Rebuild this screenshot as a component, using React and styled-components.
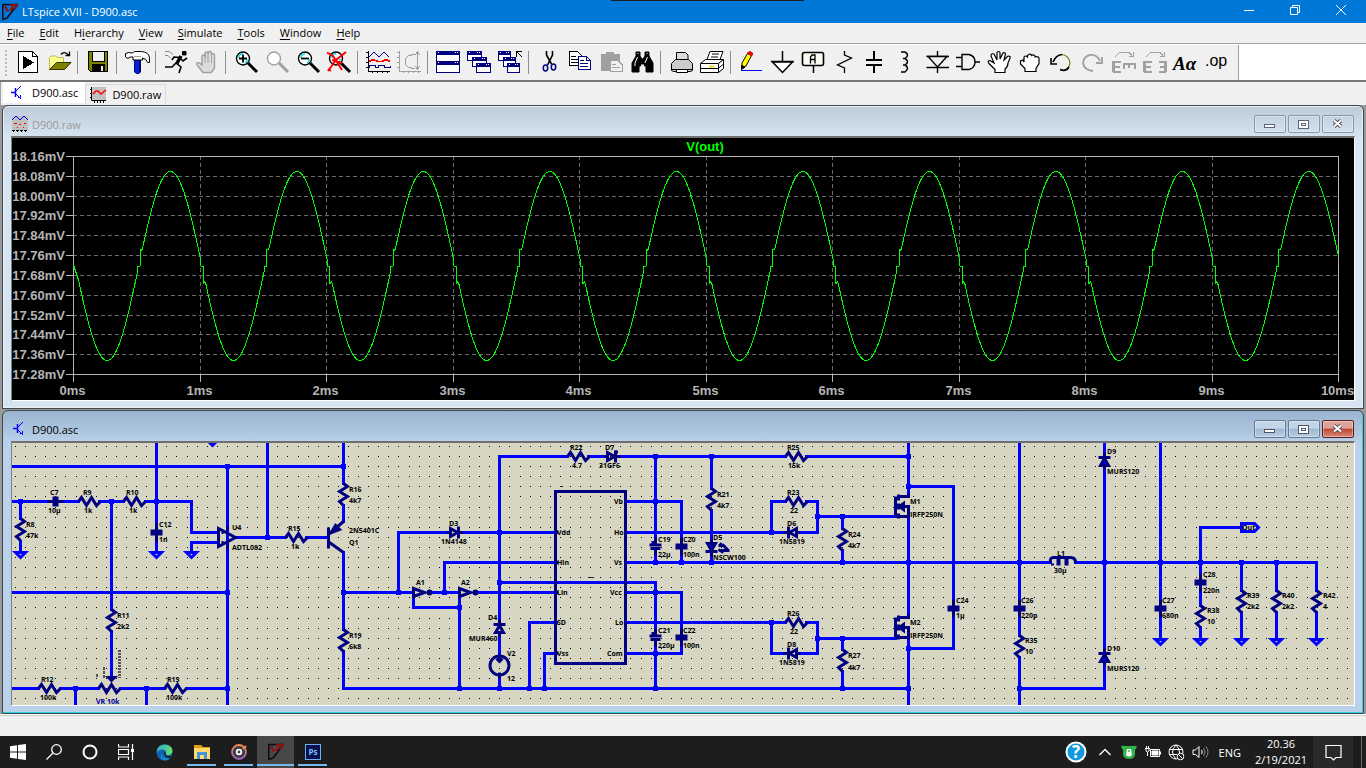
import React from 'react';
import styled, { createGlobalStyle } from 'styled-components';

const GlobalStyle = createGlobalStyle`
  * {
    box-sizing: border-box;
  }

  body {
    margin: 0;
    background: #f0f0f0;
    font-family: 'Open Sans', 'Noto Sans', sans-serif;
    font-size: 11px;
    color: #000;
  }

  button {
    font: inherit;
    color: inherit;
    background: none;
    border: none;
    padding: 0;
    margin: 0;
  }
`;

const Desktop = styled.div`
  display: flex;
  flex-direction: column;
  min-height: 100vh;
`;

const TitleBar = styled.header`
  position: relative;
  display: flex;
  align-items: center;
  height: 23px;
  padding-right: 2px;
  background: #0078d7;
  color: #fff;
`;

const TopHandle = styled.div`
  position: absolute;
  top: 0;
  left: 611px;
  width: 193px;
  height: 1px;
  background: #1f1f1f;
`;

const AppTitle = styled.h1`
  flex: 1;
  margin: 0;
  padding-left: 4px;
  font-size: 11px;
  font-weight: 400;
`;

const AppLogo = styled.svg`
  margin-left: 2px;
  width: 16px;
  height: 18px;
`;

const CaptionButton = styled.button`
  display: flex;
  align-items: center;
  justify-content: center;
  align-self: flex-start;
  width: 46px;
  height: 20px;
`;

const MenuBar = styled.nav`
  display: flex;
  align-items: center;
  gap: 15px;
  height: 21px;
  padding-left: 7px;
  border-bottom: 1px solid #a0a0a0;
`;

const MenuItem = styled.button`
  line-height: 18px;

  u {
    text-underline-offset: 2px;
  }
`;

const ToolbarRow = styled.div`
  display: flex;
  height: 38px;
  background: #fff;
  border-top: 1px solid #fff;
  border-bottom: 2px solid #757575;
`;

const Toolbar = styled.div`
  display: flex;
  align-items: center;
  padding-right: 6px;
  background: #f0f0f0;
  border-right: 1px solid #a0a0a0;
`;

const Grip = styled.div`
  width: 2px;
  height: 26px;
  margin: 0 6px 0 5px;
  background: repeating-linear-gradient(#bcbcbc 0 2px, #f0f0f0 2px 4px);
`;

const ToolButton = styled.button`
  display: flex;
  justify-content: center;
  width: 31px;
`;

const ToolIcon = styled.svg`
  display: block;
  width: 25px;
  height: 23px;
  overflow: visible;
  fill: none;
  stroke: #000;
  stroke-width: 1;
`;

const Separator = styled.div`
  width: 1px;
  height: 23px;
  margin: 0 5px 0 2px;
  background: #909090;
`;

const TabStrip = styled.div`
  display: flex;
  align-items: flex-start;
  height: 23px;
  padding-left: 2px;
  border-left: 1px solid #a0a0a0;
`;

const Tab = styled.button`
  display: flex;
  align-items: center;
  gap: 6px;
  height: ${(p) => (p.$active ? '21px' : '20px')};
  margin-top: ${(p) => (p.$active ? '0' : '2px')};
  padding: ${(p) => (p.$active ? '0 7px' : '0 4px')};
  background: ${(p) => (p.$active ? '#fff' : 'transparent')};
  border: ${(p) => (p.$active ? 'none' : '1px solid #d9d9d9')};
  border-bottom: none;
`;

const SmallIcon = styled.svg`
  display: block;
  width: 16px;
  height: 16px;
  overflow: visible;
  fill: none;
`;

const Workspace = styled.main`
  flex: 1;
  display: flex;
  flex-direction: column;
  gap: 1px;
  padding: 0 2px;
  background: #9a9a9a;
`;

const ChildWindow = styled.section`
  flex: 1;
  display: flex;
  flex-direction: column;
  padding: 0 8px 7px;
  border: 1px solid #40464d;
  border-radius: 6px 6px 0 0;
  background: ${(p) =>
    p.$active
      ? 'linear-gradient(#9ab4d0, #b9d1ea 32px)'
      : 'linear-gradient(#bdcbd9, #d7e4f2 32px)'};
  box-shadow: inset ${(p) => (p.$active ? '-1px -1px 0 #30d0e0' : '0 0 0 1px #e8f0f8')};
`;

const ChildTitle = styled.div`
  display: flex;
  align-items: center;
  gap: 4px;
  height: 30px;
  padding: 6px 1px 0 1px;
`;

const ChildName = styled.h2`
  flex: 1;
  margin: 0;
  font-size: 11px;
  font-weight: 400;
  color: ${(p) => (p.$active ? '#000' : '#999')};
`;

const WindowButtons = styled.div`
  display: flex;
  gap: 2px;
`;

const closeFill = 'linear-gradient(#e0a298 0 45%, #bf4530 50%, #d68a78)';
const activeFill = 'linear-gradient(#c3d5e8 0 45%, #9fb8d2 50%, #b9cde2)';

const WindowButton = styled.button`
  display: flex;
  align-items: center;
  justify-content: center;
  width: 32px;
  height: 18px;
  border: 1px solid ${(p) => (p.$danger ? '#571f23' : p.$active ? '#66788f' : '#8896ac')};
  border-radius: 2px;
  background: ${(p) => (p.$danger ? closeFill : p.$active ? activeFill : 'transparent')};
  box-shadow: inset 0 0 0 1px rgba(255, 255, 255, 0.35);
`;

const Pane = styled.div`
  flex: 1;
  display: flex;
  min-height: 262px;
  border: 1px solid #fff;
  border-top: 2px solid #707070;
  border-left-color: #808080;
  background: ${(p) => p.$fill};
`;

const Drawing = styled.svg`
  display: block;
  flex: 1;
  width: 100%;
  min-width: 0;
`;

const ChartText = styled.text`
  font: 700 13px 'Liberation Sans', Arial, sans-serif;
  fill: ${(p) => p.$fill || '#b4b4b4'};
`;

const PartText = styled.text`
  font: 700 7px 'Open Sans', 'Noto Sans', sans-serif;
  fill: ${(p) => p.$fill || '#000'};
`;

const StatusBar = styled.footer`
  height: 22px;
  border-top: 1px solid #fff;
  box-shadow: inset 0 1px 0 #d0d0d0;
  background: #f0f0f0;
`;

const Taskbar = styled.nav`
  display: flex;
  align-items: stretch;
  height: 32px;
  background: #1d1d1d;
  color: #fff;
`;

const TaskButton = styled.button`
  display: flex;
  flex-direction: column;
  align-items: center;
  justify-content: center;
  width: ${(p) => (p.$pinned ? '37px' : '36px')};
  background: ${(p) => (p.$active ? '#484848' : 'none')};
  position: relative;

  &::after {
    content: '';
    position: absolute;
    bottom: 2px;
    left: ${(p) => (p.$active ? '0' : '4px')};
    right: ${(p) => (p.$active ? '0' : '4px')};
    height: 2px;
    background: ${(p) => (p.$open ? '#76b9ed' : 'none')};
  }
`;

const TaskGap = styled.div`
  width: 2px;
`;

const Tray = styled.div`
  display: flex;
  align-items: center;
  margin-left: auto;
`;

const TrayButton = styled.button`
  display: flex;
  align-items: center;
  justify-content: center;
  width: ${(p) => p.$width || 24}px;
  height: 32px;
`;

const Language = styled.span`
  padding: 0 13px 0 6px;
`;

const Clock = styled.time`
  display: flex;
  flex-direction: column;
  align-items: center;
  width: 54px;
  line-height: 16px;
`;

const ActionCenter = styled.button`
  display: flex;
  align-items: center;
  justify-content: center;
  width: 40px;
  height: 32px;
  margin: 0 8px 0 5px;
  background: #292929;
`;

const ShowDesktop = styled.button`
  width: 5px;
  height: 32px;
  border-left: 1px solid #6a6a6a;
`;

/* ---------- toolbar icons, drawn on a 25 x 23 grid ---------- */

const Lens = ({ color = '#000', children }) => (
  <>
    <circle cx="9" cy="7.5" r="6.5" fill="#fff" stroke={color} strokeWidth="1.4" />
    {color === '#000' && (
      <path d="M5 7V5L7 3h2M13 8v2l-2 2" stroke="#00e0e0" strokeWidth="1.4" />
    )}
    <path d="M14 12l9 9" stroke={color} strokeWidth="3" />
    {children}
  </>
);

const MiniWindow = ({ x, y, w = 14, h = 9 }) => (
  <>
    <rect x={x + 0.5} y={y + 0.5} width={w} height={h} fill="#fff" stroke="#000080" />
    <path d={`M${x} ${y + 2}h${w + 1}`} stroke="#000080" strokeWidth="4" />
    <path
      d={`M${x + 1.5} ${y + 1.5}h1M${x + w - 4} ${y + 1.5}h1M${x + w - 2} ${y + 1.5}h1`}
      stroke="#fff"
    />
  </>
);

const tools = [
  {
    name: 'Run schematic',
    art: (
      <g shapeRendering="crispEdges">
        <path d="M2.5 .5H16.5L21.5 5.5V21.5H2.5Z" fill="#fff" />
        <path d="M16.5 .5V5.5H21.5" />
        <path d="M7 5L18 11.5L7 18Z" fill="#000" stroke="none" />
      </g>
    ),
  },
  {
    name: 'Open',
    art: (
      <>
        <path d="M2.5 18V6.5l1.5-1.5h5l1.5 1.5h6v5" fill="#ffff8c" stroke="#b8b860" />
        <path d="M2.500 18.5L9.5 11.5H24L17.5 18.5Z" fill="#808000" stroke="#303000" />
        <path d="M14 3.5q3-4 7.5 .5M22.5 .5v4h-4" strokeWidth="1.3" />
      </>
    ),
    end: true,
  },
  {
    name: 'Save',
    art: (
      <g shapeRendering="crispEdges">
        <path d="M2.5 .5H21.5V20.5H4.5L2.5 18.5Z" fill="#808000" />
        <rect x="6.5" y=".5" width="12" height="10" fill="#f0f0f0" />
        <rect x="6" y="13" width="13" height="8" fill="#000" stroke="none" />
        <rect x="15" y="15" width="2" height="5" fill="#e8e8e8" stroke="none" />
      </g>
    ),
    end: true,
  },
  {
    name: 'Control panel',
    art: (
      <>
        <path d="M9.5 8h6v13l-1.5 1.5h-2.5L9.5 21Z" fill="#0020e0" stroke="#000080" />
        <path d="M15 8v13" stroke="#000060" strokeWidth="2" />
        <path
          d="M.5 2.5l3-1 4 .5 2-1.500h7q7 .5 8 6v5h-2q-1-4-5-4.5v2H8V6H5L3 7.5.5 6Z"
          fill="#fafafa"
        />
        <path d="M9 5.500h7" stroke="#a0a0a0" />
      </>
    ),
    end: true,
  },
  {
    name: 'Run',
    art: (
      <>
        <path d="M18.5 .5h3.5v3.5h-3.500Z" fill="#000" />
        <path d="M17 5L12.500 13" strokeWidth="3.500" />
        <path d="M16 6.500L10 6l-2 3M17 8l2 2 4-3M12 12l5 4-2 6M12 12l-4 4H1" strokeWidth="1.6" />
        <path d="M1 .5h4l4 3M1 4.5h3l3 3" stroke="#888" />
      </>
    ),
  },
  {
    name: 'Halt',
    art: (
      <>
        <path
          d="M8 21.500L2.500 14.500Q0 11 4.500 12L7 14V5q1.500-2 3 0V2q1.500-2 3 0V1.500q2-2 3.500 0V3q2-1 3 .5V17L16.500 21.500Z"
          fill="#dcdcdc"
          stroke="#a0a0a0"
          strokeWidth="1.4"
        />
        <path d="M10 4v8M13 3v9M16.500 3v9" stroke="#a0a0a0" />
      </>
    ),
    end: true,
  },
  { name: 'Zoom in', art: <Lens><path d="M5 7.5h8M9 3.5v8" strokeWidth="1.8" /></Lens> },
  { name: 'Pan', art: <Lens color="#a0a0a0" /> },
  { name: 'Zoom out', art: <Lens><path d="M5 7.5h8" strokeWidth="1.8" /></Lens> },
  {
    name: 'Zoom full extents',
    art: (
      <Lens>
        <path d="M0 1.5L6 5l9 14M19 1L9 9 1 20M5 9l10 3M1 18l3 2" stroke="#f00" strokeWidth="2" />
      </Lens>
    ),
    end: true,
  },
  {
    name: 'Autorange',
    art: (
      <g shapeRendering="crispEdges">
        <path d="M2.5 0V20.5H24M0 1.5h3M0 6.5h3M0 11.5h3M0 16.5h3M6.5 20v2M11.5 20v2M16.5 20v2M21.5 20v2" />
        <path d="M3 6L8 1l5 5 5-5 5 5" stroke="#0000a0" />
        <path d="M3 10.5l4-2 5 2h4l4-2 4 2" stroke="#f00" strokeWidth="1.5" />
        <path d="M3 16.5v-2h6v2h3v-2h6v2h6v-2" stroke="#000080" />
      </g>
    ),
  },
  {
    name: 'FFT',
    art: (
      <g shapeRendering="crispEdges" stroke="#a0a0a0">
        <path d="M2.5 0V20.5H24M0 1.5h3M0 6.5h3M0 11.5h3M0 16.5h3M6.5 20v2M11.5 20v2M16.5 20v2M21.5 20v2" />
        <path d="M20.5 1v17M18 4l2.5-3L23 4M18 15l2.5 3 2.5-3M18 3l-7 2-3 3v5l3 3 7 2" />
      </g>
    ),
    end: true,
  },
  {
    name: 'Tile windows',
    art: (
      <g shapeRendering="crispEdges">
        <MiniWindow x={0} y={0} w={23} h={11} />
        <MiniWindow x={0} y={10} w={23} h={11} />
      </g>
    ),
  },
  {
    name: 'Cascade windows',
    art: (
      <g shapeRendering="crispEdges">
        <MiniWindow x={0} y={0} />
        <MiniWindow x={5} y={6} />
        <MiniWindow x={9} y={12} />
      </g>
    ),
  },
  {
    name: 'Close all windows',
    art: (
      <g shapeRendering="crispEdges">
        <MiniWindow x={0} y={0} w={12} />
        <MiniWindow x={5} y={6} w={12} />
        <MiniWindow x={9} y={12} w={12} />
        <path d="M18.5 6V.5H24M18.5 .5L24 6" />
      </g>
    ),
    end: true,
  },
  {
    name: 'Cut',
    art: (
      <>
        <path d="M9.5 0v4l5 9M15.500 0v4l-5 10" strokeWidth="1.6" />
        <ellipse cx="8.5" cy="17" rx="2.2" ry="3" stroke="#000080" strokeWidth="1.5" />
        <ellipse cx="16.5" cy="16" rx="2.2" ry="3" stroke="#000080" strokeWidth="1.5" />
      </>
    ),
  },
  {
    name: 'Copy',
    art: (
      <g shapeRendering="crispEdges">
        <path d="M1.5 .5H9.5L13.5 4.5V14.5H1.5Z" fill="#fff" />
        <path d="M3 5.5h5M3 8.5h7M3 11.5h7" />
        <path d="M10.5 5.5H18.5L22.5 9.5V18.5H10.5Z" fill="#fff" stroke="#000080" />
        <path d="M18.5 5.5v4h4M12 9.5h4M12 12.5h8M12 15.5h8" stroke="#000080" />
      </g>
    ),
  },
  {
    name: 'Paste',
    art: (
      <g shapeRendering="crispEdges" stroke="#a0a0a0">
        <path d="M2 3h5V1h7v2h6v16H2Z" fill="#a0a0a0" />
        <path d="M11.5 9.5H19l4 4v7H11.5Z" fill="#f0f0f0" />
        <path d="M13 13.5h4M13 16.5h8" />
      </g>
    ),
  },
  {
    name: 'Find',
    art: (
      <>
        <path
          d="M6 1h4v4l2 3h1l2-3V1h4v4l4 7v9h-7v-6h-1.5v-2h-4v2H9v6H2v-9l4-7Z"
          fill="#000"
        />
        <path d="M7.5 6L5 12v3M17.5 6L15 12M7.5 2.5h1M16.5 2.5h1" stroke="#fff" />
      </>
    ),
    end: true,
  },
  {
    name: 'Print',
    art: (
      <>
        <path d="M7.5 9V1.5h9L19 4v5" fill="#ddd" />
        <path d="M2.5 12.5l4-4h13l4 4v7l-2 1H4.5l-2-1Z" fill="#ccc" />
        <path d="M2 18.500h21M7.5 18.5h11v3h-11Z" fill="#fff" />
      </>
    ),
  },
  {
    name: 'Print setup',
    art: (
      <>
        <path d="M7 8.5L10 .5h13l-3 8" fill="#fff" />
        <path d="M12 3h7M11 6h7" />
        <path d="M.5 12.5l5-4h18l-5 4Z" fill="#fff" />
        <path d="M.5 12.5h18v9H.5ZM18.5 12.5l5-4v9l-5 4" fill="#fff" />
        <path d="M1 17.5h17l5-4" />
        <path d="M9 15.5h5" stroke="#e8e000" strokeWidth="2" />
      </>
    ),
    end: true,
  },
  {
    name: 'Wire',
    art: (
      <>
        <path d="M3 17v-5L8.5 2.500l4 2L7 15Z" fill="#ffff00" />
        <path d="M8.5 2q2-3 5 0 .5 2-1 3Z" fill="#f00" stroke="#c00" />
        <path d="M2.5 18.5v-4l3.5 1.5Z" fill="#000" />
        <path d="M2 19.5h21" stroke="#00f" />
      </>
    ),
  },
  {
    name: 'Ground',
    art: (
      <g strokeWidth="1.5">
        <path d="M12.5 0v10M1 10.500H24" />
        <path d="M2.500 11H22.500L12.5 21.5Z" fill="#fff" />
      </g>
    ),
  },
  {
    name: 'Label net',
    art: (
      <>
        <rect x="1.5" y="1.5" width="21" height="13" rx="2" strokeWidth="1.6" fill="#fafaf0" />
        <path d="M12.5 15v7" strokeWidth="1.5" />
        <path d="M9.5 12.500V6l1.5-2h3v8.500M10 8.5h4" strokeWidth="1.3" />
      </>
    ),
  },
  { name: 'Resistor', art: <path d="M12.5 0v4l7 3-14 7 7 3v5" strokeWidth="1.3" /> },
  {
    name: 'Capacitor',
    art: (
      <g shapeRendering="crispEdges" strokeWidth="2">
        <path d="M11 0v8M11 14v8M3 9h16M3 14h16" />
      </g>
    ),
  },
  {
    name: 'Inductor',
    art: <path d="M7 1h4q5 3 0 6.5H9h2q5 3 0 6.5H9h2q5 3 0 7H7" strokeWidth="1.5" />,
  },
  {
    name: 'Diode',
    art: (
      <g strokeWidth="1.4">
        <path d="M12.5 0v5M12.5 16v6M1.5 16.5H24M1.500 5.500H24" />
        <path d="M3 5.5H22L12.5 16Z" fill="#f0f0f0" />
      </g>
    ),
  },
  {
    name: 'Component',
    art: (
      <g strokeWidth="1.4">
        <path d="M0 6.5h6M0 15.5h6M19 11h5" />
        <path d="M6 3.5h7q6 1.5 6 7.5t-6 7.5H6Z" fill="#f0f0f0" />
      </g>
    ),
  },
  {
    name: 'Move',
    art: (
      <path
        d="M8 21.5v-3L2 12.5q-2-3 1-3l4 2.5L4 5q0-3 3-2l3 6V1.5q1.5-2 3 0V8l3-6q2-1 2.5 1L17 9l4-4q3 0 2 2l-2 5q0 4-3 6v3.5Z"
        fill="#fff"
        strokeWidth="1.2"
      />
    ),
  },
  {
    name: 'Drag',
    art: (
      <path
        d="M7 20.5v-3L2.500 13V10l2.500-1 1 2V6q1.500-2 3.500 0V4.500q2-2 3.500-1l.5 1q2-1.500 3.500 .5v1q3-1 4 1v5.500L18 17.500v3Z"
        fill="#fff"
        strokeWidth="1.2"
      />
    ),
  },
  {
    name: 'Undo',
    art: (
      <>
        <path d="M4 11q3-7 9-7.500 7 1 8 8.500-1 6-6 7" stroke="#77700a" strokeWidth="1.2" />
        <path d="M4 11q3-7 9-7.500M20 16q-3 5-9 2.500M2 7v6h6" strokeWidth="1.6" />
      </>
    ),
  },
  {
    name: 'Redo',
    art: <path d="M20 10Q17 3 10 4 4 5 3 12q1 7 10 8M22 6v6h-6" stroke="#a0a0a0" strokeWidth="1.8" />,
  },
  {
    name: 'Rotate',
    art: (
      <g stroke="#a0a0a0" shapeRendering="crispEdges">
        <path d="M2.500 21V10M2 11h8M2 16h7M2 21h8" strokeWidth="2.500" />
        <path d="M12 13h13M13 12v6M18 12v5M24 12v6" strokeWidth="2.500" />
        <path d="M4 6l5-5h9l3 4M22 1v4h-4" />
      </g>
    ),
  },
  {
    name: 'Mirror',
    art: (
      <g stroke="#a0a0a0" shapeRendering="crispEdges">
        <path d="M2.500 21V10M2 11h8M2 16h7M2 21h8M23.500 21V10M24 11h-7M24 16h-6M24 21h-7" strokeWidth="2.500" />
        <path d="M4 6l5-5h9l3 4M22 1v4h-4" />
      </g>
    ),
  },
  {
    name: 'Text',
    art: (
      <text x="0" y="19" fill="#000" stroke="none" fontFamily="'Liberation Serif', serif" fontStyle="italic" fontWeight="700" fontSize="19">
        Aα
      </text>
    ),
  },
  {
    name: 'SPICE directive',
    art: (
      <text x="1" y="15" fill="#000" stroke="none" fontFamily="'Liberation Sans', sans-serif" fontSize="16">
        .op
      </text>
    ),
  },
];

const menus = ['File', 'Edit', 'Hierarchy', 'View', 'Simulate', 'Tools', 'Window', 'Help'];

/* ---------- waveform ---------- */

const PLOT = { left: 73, right: 1338, top: 156, bottom: 374 };
const PERIOD = 126.5;
const MID = 266;

const voltages = [
  '18.16mV', '18.08mV', '18.00mV', '17.92mV', '17.84mV', '17.76mV',
  '17.68mV', '17.60mV', '17.52mV', '17.44mV', '17.36mV', '17.28mV',
];

const yTick = (i) => Math.round(PLOT.top + ((PLOT.bottom - PLOT.top) * i) / 11) + 0.5;
const xTick = (i) => Math.round(PLOT.left + PERIOD * i) + 0.5;

// the crossover kink of the output stage shows at every zero crossing
function traceY(x) {
  const phase = (x - 75) / PERIOD;
  const ideal = MID + 94.5 * Math.sin(2 * Math.PI * phase);
  if (x < 80) return Math.max(ideal, MID - 1 + (x - PLOT.left) * 3);
  const half = Math.round(phase * 2);
  const dx = x - 75 - (half * PERIOD) / 2;
  const dir = half % 2 ? -1 : 1;
  if (dx >= -1 && dx < 1.5) return MID;
  if (dx >= 1.5 && dx < 4.5) {
    const edge = MID + dir * 18;
    return edge + ((ideal - edge) * (dx - 1.5)) / 3;
  }
  return ideal;
}

const trace = [];
for (let x = PLOT.left; x <= PLOT.right; x += 0.5) {
  trace.push(`${x + 0.5},${traceY(x).toFixed(1)}`);
}

function Waveform() {
  return (
    <Drawing viewBox="12 138 1342 262" role="img" aria-label="V(out)">
      <g shapeRendering="crispEdges" fill="none">
        <g stroke="#6c6c6c" strokeDasharray="4 3">
          {voltages.slice(1, -1).map((v, i) => (
            <path key={v} d={`M${PLOT.left} ${yTick(i + 1)}H${PLOT.right}`} />
          ))}
          {[1, 2, 3, 4, 5, 6, 7, 8, 9].map((i) => (
            <path key={i} d={`M${xTick(i)} ${PLOT.top}V${PLOT.bottom}`} />
          ))}
        </g>
        <g stroke="#b4b4b4">
          <rect x="73.5" y="156.5" width="1265" height="218" />
          {voltages.map((v, i) => (
            <path key={v} d={`M66 ${yTick(i)}H73`} />
          ))}
          {Array.from({ length: 11 }, (_, i) => (
            <path key={i} d={`M${xTick(i)} 374V382`} />
          ))}
        </g>
        <polyline points={trace.join(' ')} stroke="#00ff00" />
      </g>
      {voltages.map((v, i) => (
        <ChartText key={v} x="65" y={yTick(i) + 4.5} textAnchor="end">{v}</ChartText>
      ))}
      {Array.from({ length: 11 }, (_, i) => (
        <ChartText key={i} x={xTick(i) - 1} y="395" textAnchor="middle">{`${i}ms`}</ChartText>
      ))}
      <ChartText x="705" y="151" textAnchor="middle" $fill="#00ff00">V(out)</ChartText>
    </Drawing>
  );
}

/* ---------- schematic ---------- */

let gridDots = '';
for (let r = 0; r < 26; r += 1) {
  for (let c = 0; c < 133; c += 1) {
    gridDots += `M${Math.round(15 + c * 10.09)} ${Math.round(446 + r * 10.09) + 0.5}h1`;
  }
}

const wires = [
  'M12 466H343M156 443V526M12 501H51M60 501H78M99 501H123M145 501H191V532H217',
  'M20 501V518M20 541V551M156 538V551M191 551V542H217M227 466V706M237 537H285M267 443V537',
  'M306 537H327M343 443V483M343 505V521M343 552V629M343 651V688H908M12 592H227',
  'M111 501V609M111 631V678M12 688H38M60 688H98M120 688H164M186 688H227M75 688V706M146 688V706',
  'M343 592H413V607H459M398 592V532H447M460 532H556M433 592H459V688M444 592V562H556M479 592H556',
  'M567 456H499V620M499 635V655M499 675V688M499 582H655V632M588 456H603M618 456H785M806 456H908',
  'M655 456V541M626 501H681V541M655 551V562M681 551V562M626 532H785M626 562H1050',
  'M626 592H681V632M681 642V653H626M655 642V688M626 622H785M529 688V622H556M544 688V653H556',
  'M711 456V488M711 510V562M785 501H771V532M806 501H817V532H799M817 516H895M842 516V528M842 550V562',
  'M771 622V653H785M806 622H817V653H799M817 638H895M842 638V649M842 671V688',
  'M908 443V496M908 506V617M908 627V706M908 486H953V603M953 613V648H908',
  'M1019 443V603M1019 613V635M1019 657V706M1019 688H1104V443M1075 562H1316V590M1160 443V603M1160 613V638',
  'M1200 577V527H1240M1200 587V605M1200 627V638M1200 562V577M1241 562V590M1241 612V638M1276 562V590M1276 612V638M1316 612V638',
];

const nodes = [
  [227, 466], [343, 466], [20, 501], [111, 501], [156, 501], [267, 537], [227, 592],
  [227, 688], [75, 688], [146, 688], [343, 592], [398, 592], [444, 592], [459, 607],
  [459, 688], [499, 532], [499, 582], [499, 688], [529, 688], [544, 688], [655, 456],
  [711, 456], [655, 501], [655, 562], [681, 562], [711, 562], [655, 592], [655, 653],
  [655, 688], [771, 532], [771, 622], [817, 516], [842, 516], [842, 562], [817, 638],
  [842, 638], [842, 688], [908, 456], [908, 486], [908, 562], [908, 648], [908, 688],
  [1019, 562], [1019, 688], [1104, 562], [1160, 562], [1200, 562], [1241, 562], [1276, 562],
];

const uprightResistors = [
  [20, 518], [111, 609], [343, 483], [343, 629], [711, 488], [842, 528], [842, 649],
  [1019, 635], [1200, 605], [1241, 590], [1276, 590], [1316, 590],
];

const flatResistors = [
  [78, 501], [123, 501], [285, 537], [38, 688], [98, 688], [164, 688],
  [567, 456], [785, 456], [785, 501], [785, 622],
];

const capacitors = [
  [156, 532], [681, 546], [681, 637], [953, 608], [1019, 608], [1160, 608], [1200, 582],
];

const polarCapacitors = [[655, 546], [655, 637]];

const grounds = [
  [20, 552], [156, 552], [191, 552], [212, 440], [1160, 639], [1200, 639],
  [1241, 639], [1276, 639], [1316, 639],
];

// x, y, rotation; the cathode points along the rotation
const diodes = [
  [454, 532, 0], [611, 456, 0], [792, 532, 180], [792, 653, 180],
  [499, 628, -90], [711, 547, 90], [1104, 461, -90], [1104, 657, -90],
];

const labels = [
  ['C7', 50, 493], ['10µ', 48, 511], ['R9', 83, 493], ['1k', 84, 511], ['R10', 126, 493],
  ['1k', 129, 511], ['C12', 159, 525], ['1n', 159, 540], ['R8', 26, 525], ['47k', 26, 536],
  ['U4', 232, 528], ['ADTL082', 232, 548], ['R11', 117, 616], ['2k2', 117, 627],
  ['R12', 41, 680], ['100k', 40, 698], ['R13', 167, 680], ['100k', 166, 698],
  ['R15', 288, 529], ['1k', 291, 547], ['R16', 349, 490], ['4k7', 349, 501],
  ['2N5401C', 349, 531], ['Q1', 349, 543], ['D3', 449, 524], ['1N4148', 441, 542],
  ['A1', 416, 583], ['A2', 461, 583], ['R19', 349, 636], ['6k8', 349, 647],
  ['D4', 488, 618], ['MUR460', 469, 639], ['V2', 507, 654], ['12', 507, 679],
  ['R22', 570, 448], ['4.7', 572, 466], ['D7', 605, 448], ['31GF6', 599, 466],
  ['Vdd', 557, 533], ['Hin', 557, 563], ['Lin', 557, 593], ['SD', 557, 623], ['Vss', 557, 654],
  ['Vb', 614, 502], ['Ho', 614, 533], ['Vs', 614, 563], ['Vcc', 610, 593], ['Lo', 615, 623],
  ['Com', 607, 654], ['C19', 658, 540], ['22µ', 658, 555], ['C20', 683, 540], ['100n', 683, 555],
  ['C21', 658, 631], ['220µ', 658, 646], ['C22', 683, 631], ['100n', 683, 646],
  ['R21', 717, 495], ['4k7', 717, 506], ['D5', 713, 538], ['NSCW100', 713, 558],
  ['R25', 787, 448], ['15k', 788, 466], ['R23', 787, 493], ['22', 790, 511],
  ['D6', 787, 524], ['1N5819', 779, 542], ['R24', 848, 535], ['4k7', 848, 546],
  ['R26', 787, 614], ['22', 790, 632], ['D8', 787, 645], ['1N5819', 779, 663],
  ['R27', 848, 656], ['4k7', 848, 668], ['M1', 910, 502], ['IRFP250N', 910, 515],
  ['M2', 910, 623], ['IRFP250N', 910, 636], ['D9', 1107, 452], ['MURS120', 1107, 472],
  ['L1', 1057, 554], ['30µ', 1054, 571], ['C24', 956, 601], ['1µ', 956, 616],
  ['C26', 1021, 601], ['220p', 1021, 616], ['R35', 1025, 641], ['10', 1025, 652],
  ['C27', 1162, 601], ['680n', 1162, 616], ['D10', 1107, 649], ['MURS120', 1107, 669],
  ['C28', 1203, 575], ['220n', 1203, 591], ['R38', 1207, 611], ['10', 1207, 622],
  ['R39', 1247, 596], ['2k2', 1247, 607], ['R40', 1282, 596], ['2k2', 1282, 607],
  ['R42', 1323, 596], ['4', 1323, 607], ['Out', 1242, 528],
];

const at = (x, y, r) => `translate(${x} ${y})${r ? ` rotate(${r})` : ''}`;

const zigzag = 'M0 0L4 3L-4 8L4 13L-4 18L0 22';

function Mosfet({ x, y }) {
  return (
    <g transform={at(x, y)}>
      <path d="M-13 0V20M-13 20H-9M-10 -2V4M-10 7V13M-10 17V22M-10 0H0V-3M-10 10H0V22M-10 20H0" />
      <path d="M-9 10L-5 7V13Z" />
    </g>
  );
}

function Schematic() {
  return (
    <Drawing viewBox="12 443 1342 262" role="img" aria-label="D900 schematic">
      <path d={gridDots} stroke="#000" shapeRendering="crispEdges" />
      <g transform="translate(.5 .5)" fill="none" strokeWidth="3">
        <g stroke="#0000ff" strokeLinecap="square" shapeRendering="crispEdges">
          <path d={wires.join('')} />
        </g>
        <g fill="#0000ff">
          {nodes.map(([x, y]) => (
            <rect key={`${x}-${y}`} x={x - 2.5} y={y - 2.5} width="5" height="5" />
          ))}
        </g>
        <g stroke="#0000ff">
          {grounds.map(([x, y]) => (
            <path key={x} transform={at(x, y)} d="M-5 0H5L0 5Z" strokeWidth="3" />
          ))}
          <path d="M1241 523H1254L1258 527L1254 531H1241Z" />
        </g>
        <g stroke="#000080">
          {uprightResistors.map(([x, y]) => (
            <path key={`${x}-${y}`} transform={at(x, y)} d={zigzag} />
          ))}
          {flatResistors.map(([x, y]) => (
            <path key={`${x}-${y}`} transform={at(x, y, -90)} d={zigzag} />
          ))}
          {capacitors.map(([x, y]) => (
            <path key={`${x}-${y}`} transform={at(x, y)} d="M-6 -1.500H6M-6 1.500H6M0 -9V-2M0 2V9" />
          ))}
          <path transform={at(55, 501)} d="M-1.500 -5V5M1.500 -5V5M-8 0H-2M2 0H8" />
          {polarCapacitors.map(([x, y]) => (
            <path key={`${x}-${y}`} transform={at(x, y)} d="M-6 -1.500H6M-5 2H5M0 -9V-2M0 2V9M-4 -4H0" />
          ))}
          {diodes.map(([x, y, r]) => (
            <path key={`${x}-${y}`} transform={at(x, y, r)} d="M-4 -4V4L3 0ZM4 -6V6M-8 0H-4M4 0H9" />
          ))}
          <path d="M616 450v3M719 543l5 3M718 549l5 3M722 544l5 5M721 550h8M718 545h4" />

          <rect x="555" y="491" width="70" height="172" />

          <path d="M218 528V546L235 537ZM227 530v-4M227 544v4M221 532h2M221 542h2" />
          <path d="M328 527V548M329 533L343 521M329 542L343 552" />
          <path d="M331 532L339 529L335 525Z" />
          <path d="M413 588V596L424 592Z" />
          <circle cx="429" cy="592" r="1.5" />
          <path d="M459 588V596L470 592Z" />
          <circle cx="475" cy="592" r="1.5" />
          <circle cx="499" cy="665" r="9.5" />
          <path d="M499 656V661M496 658L499 661L502 658M499 672V678" />
          <path d="M108 677h6l-3 3Z" />
          <Mosfet x={908} y={496} />
          <Mosfet x={908} y={617} />
          <path d="M1050 562Q1049 557 1053 557H1070Q1075 557 1075 562M1052 563V565" />
          <path d="M1058 558V565M1066 558V565" strokeWidth="4" />
        </g>
      </g>
      {labels.map(([text, x, y]) => (
        <PartText key={`${x}-${y}`} x={x} y={y + 2}>{text}</PartText>
      ))}
      <PartText x="96" y="704" $fill="#0000a0">VR 10k</PartText>
      <g stroke="#222" shapeRendering="crispEdges">
        <path d="M560 486.5h3M588 577.5h6" />
        <path d="M119.5 650V678" strokeWidth="3" strokeDasharray="2 1" opacity=".7" />
        <path d="M103.5 667V678M96.5 674V678" strokeWidth="2" strokeDasharray="3 1" opacity=".7" />
      </g>
    </Drawing>
  );
}

/* ---------- window parts ---------- */

const Transistor = () => (
  <SmallIcon viewBox="0 0 16 16" stroke="#0000ff" aria-hidden="true">
    <path d="M1 7.5h5M5.500 3v9" strokeWidth="1.5" />
    <path d="M6 6l5-5M6 9l5 5" />
    <path d="M8 12.500h2.500V10" />
  </SmallIcon>
);

const RawTabIcon = () => (
  <SmallIcon viewBox="0 0 16 16" aria-hidden="true">
    <rect x="2" y="0" width="14" height="13" fill="#c0c0c0" />
    <path d="M1.5 0V13.5H16M0 2.5h2M0 6.5h2M0 10.5h2M4.5 14v2M7.5 14v2M10.5 14v2M13.5 14v2" stroke="#000" />
    <path d="M3 7l3-3h2l3 3 5-4" stroke="#f00" strokeWidth="1.5" />
  </SmallIcon>
);

const RawWindowIcon = () => (
  <SmallIcon viewBox="0 0 16 16" aria-hidden="true" shapeRendering="crispEdges">
    <rect width="16" height="14" fill="#c0c0c0" />
    <path d="M0 4l4-4 4 4 4-4 4 4" stroke="#0000ff" />
    <path d="M2 7.5h3M7 8.5h2M12 7.5h2M5 11.500h1M11 11.500h1" stroke="#f00" />
    <path d="M0 14.5h16M1.5 15v1M5.5 15v1M9.5 15v1M13.5 15v1" stroke="#000" strokeDasharray="3 1" />
  </SmallIcon>
);

const Logo = (props) => (
  <svg viewBox="0 0 16 18" width="16" height="18" fill="none" aria-hidden="true" {...props}>
    <path d="M.8 1V16.5L5 15 15.5 1.5H1" stroke="#0b0b16" strokeWidth="1.5" />
    <path d="M3 3l2 4M4 7.5h3M8 2h7l-2.5 4M11 3L8.5 8" stroke="#8b1010" strokeWidth="2.2" />
  </svg>
);

function MdiWindow({ title, icon, active, fill, children }) {
  const glyph = { stroke: active ? '#4c5666' : '#59637a', fill: '#fff' };
  return (
    <ChildWindow $active={active}>
      <ChildTitle>
        {icon}
        <ChildName $active={active}>{title}</ChildName>
        <WindowButtons>
          <WindowButton $active={active} aria-label={`Minimize ${title}`}>
            <svg width="12" height="9">
              <rect x=".5" y="4.5" width="10" height="3" {...glyph} />
            </svg>
          </WindowButton>
          <WindowButton $active={active} aria-label={`Maximize ${title}`}>
            <svg width="12" height="9">
              <rect x=".5" y=".5" width="10" height="8" {...glyph} />
              <rect x="3.5" y="3.5" width="4" height="2" {...glyph} />
            </svg>
          </WindowButton>
          <WindowButton $active={active} $danger={active} aria-label={`Close ${title}`}>
            <svg width="12" height="10">
              <path d="M2 1.5l7 6M9 1.5l-7 6" stroke="#59505e" strokeWidth="4" />
              <path d="M2 1.5l7 6M9 1.5l-7 6" stroke="#fff" strokeWidth="2" />
            </svg>
          </WindowButton>
        </WindowButtons>
      </ChildTitle>
      <Pane $fill={fill}>{children}</Pane>
    </ChildWindow>
  );
}

function TaskbarRow() {
  return (
    <Taskbar>
      <TaskButton aria-label="Start">
        <svg width="16" height="16" fill="#fff">
          <path d="M0 2.3L7 1.3V7.5H0ZM8 1.1L16 0V7.5H8ZM0 8.5H7V14.7L0 13.7ZM8 8.5H16V16L8 14.9Z" />
        </svg>
      </TaskButton>
      <TaskButton aria-label="Search">
        <svg width="16" height="16" fill="none" stroke="#fff" strokeWidth="1.3">
          <circle cx="10.5" cy="5.5" r="4.8" />
          <path d="M7 9L.5 15.5" />
        </svg>
      </TaskButton>
      <TaskButton aria-label="Cortana">
        <svg width="16" height="16">
          <circle cx="8" cy="8" r="6.5" fill="none" stroke="#fff" strokeWidth="2" />
        </svg>
      </TaskButton>
      <TaskButton aria-label="Task view">
        <svg width="16" height="16" fill="none" stroke="#fff" strokeWidth="1.2">
          <path d="M.5 0V3H10.5V0M.5 16V13H10.5V16M.5 5.5H10.5V10.5H.5ZM14.5 0V16" />
          <path d="M13 5h3v3h-3Z" fill="#fff" stroke="none" />
        </svg>
      </TaskButton>
      <TaskGap />
      <TaskButton $pinned aria-label="Edge">
        <svg width="17" height="17" viewBox="0 0 17 17">
          <defs>
            <linearGradient id="edge" x1="0" y1="0" x2="1" y2="0.4">
              <stop offset="0" stopColor="#2ba3e0" />
              <stop offset="1" stopColor="#5fe06a" />
            </linearGradient>
          </defs>
          <circle cx="8.5" cy="8.5" r="8" fill="#0f62b0" />
          <path d="M.5 9Q1 .5 8.5 .5q8 .5 8 6.5-.5 4-5 4-2 0-1.5-2Q11 6 7 5.5 2 5.5 .5 9" fill="url(#edge)" />
          <path d="M8 8q2 0 1.500 2 0 3 6.500 2l-1 2Q8 15 8 8" fill="#1d1d1d" />
          <path d="M5.500 9q-1 6 9 5-3 3-7 2.300Q3 14 5.500 9" fill="#1b87d4" />
        </svg>
      </TaskButton>
      <TaskButton $pinned $open aria-label="File Explorer">
        <svg width="16" height="14">
          <path d="M0 0H7L9 2H16V14H0Z" fill="#e0a010" />
          <path d="M0 3H16V14H0Z" fill="#ffd96a" />
          <path d="M3 14V7H13V14H10V10H6V14Z" fill="#3f97dd" />
        </svg>
      </TaskButton>
      <TaskButton $pinned $open aria-label="Music">
        <svg width="16" height="16" fill="none">
          <defs>
            <linearGradient id="disc" x1="0" y1="0" x2="0" y2="1">
              <stop offset="0" stopColor="#f08a50" />
              <stop offset="1" stopColor="#a060c0" />
            </linearGradient>
          </defs>
          <circle cx="8" cy="8" r="7" stroke="url(#disc)" strokeWidth="1.8" fill="#3c3c44" />
          <circle cx="8" cy="8" r="2.3" stroke="#fff" strokeWidth="1.8" />
          <path d="M12 5l3-3" stroke="#f08a50" strokeWidth="2" />
        </svg>
      </TaskButton>
      <TaskButton $pinned $open $active aria-label="LTspice">
        <Logo />
      </TaskButton>
      <TaskButton $pinned $open aria-label="Photoshop">
        <svg width="16" height="16">
          <rect x=".5" y=".5" width="15" height="15" fill="#0a1050" stroke="#6ab0f0" />
          <text x="8" y="11" textAnchor="middle" fill="#7cc0ff" fontSize="8" fontWeight="700" fontFamily="'Open Sans', sans-serif">Ps</text>
        </svg>
      </TaskButton>
      <Tray>
        <TrayButton $width={34} aria-label="Help">
          <svg width="22" height="22">
            <circle cx="11" cy="11" r="9.5" fill="#0f9ae0" stroke="#fff" strokeWidth="2" />
            <text x="11" y="17" textAnchor="middle" fill="#fff" fontSize="17" fontWeight="700" fontFamily="'Open Sans', sans-serif">?</text>
          </svg>
        </TrayButton>
        <TrayButton aria-label="Show hidden icons">
          <svg width="12" height="8" fill="none" stroke="#fff" strokeWidth="1.3">
            <path d="M.5 7L6 1.5 11.5 7" />
          </svg>
        </TrayButton>
        <TrayButton aria-label="Security">
          <svg width="16" height="14">
            <path d="M0 2Q1 0 4 1H12Q15 0 16 2L14 5V10Q13 14 8 14T2 10V5Z" fill="#2fb344" />
            <path d="M6 4h4l1 6q-3 3-6 0Z" fill="#fff" />
            <circle cx="8" cy="6" r="1" fill="#2fb344" />
          </svg>
        </TrayButton>
        <TrayButton aria-label="Battery">
          <svg width="16" height="12" fill="none" stroke="#fff">
            <path d="M5.5 3.5H14.5V10.5H5.5Z" />
            <path d="M7 5h6v4H7Z" fill="#fff" />
            <path d="M15.5 5.500v3M1.5 0v2M3.5 0v2M0 2.500h5M1 3v2l1.500 1L4 5V3M2.500 6v4" />
          </svg>
        </TrayButton>
        <TrayButton aria-label="Network">
          <svg width="17" height="17" fill="none" stroke="#fff">
            <circle cx="8" cy="8" r="7" />
            <path d="M1 5.5H15M1 10.5H9M8 1Q1 8 8 15M8 1q4 4 3.5 8" />
            <circle cx="12.5" cy="12.5" r="3.3" fill="#1d1d1d" />
            <path d="M10.5 10.5l4 4" />
          </svg>
        </TrayButton>
        <TrayButton aria-label="Volume">
          <svg width="17" height="14" fill="none" stroke="#fff">
            <path d="M1 5h2.5L7 1.5v11L3.5 9.5H1Z" />
            <path d="M9.5 5q1.5 2 0 4" />
            <path d="M11.5 3q3 4 0 8M14 1.5q4 5.5 0 11" stroke="#888" />
          </svg>
        </TrayButton>
        <Language>ENG</Language>
        <Clock>
          <span>20.36</span>
          <span>2/19/2021</span>
        </Clock>
        <ActionCenter aria-label="Notifications">
          <svg width="17" height="17" fill="none" stroke="#fff" strokeWidth="1.2">
            <path d="M1 1.5H16V13.5H11L8.5 16 6 13.5H1Z" />
          </svg>
        </ActionCenter>
        <ShowDesktop aria-label="Show desktop" />
      </Tray>
    </Taskbar>
  );
}

function App() {
  return (
    <Desktop>
      <GlobalStyle />
      <TitleBar>
        <TopHandle />
        <AppLogo as={Logo} />
        <AppTitle>LTspice XVII - D900.asc</AppTitle>
        <CaptionButton aria-label="Minimize">
          <svg width="10" height="10"><path d="M0 5.5h10" stroke="#fff" /></svg>
        </CaptionButton>
        <CaptionButton aria-label="Restore">
          <svg width="10" height="10" fill="none" stroke="#fff">
            <path d="M.5 2.5h7v7h-7ZM2.5 2.5v-2h7v7h-2" />
          </svg>
        </CaptionButton>
        <CaptionButton aria-label="Close">
          <svg width="10" height="10"><path d="M0 0l10 10M10 0L0 10" stroke="#fff" /></svg>
        </CaptionButton>
      </TitleBar>
      <MenuBar>
        {menus.map((m) => (
          <MenuItem key={m}>
            {m === 'Hierarchy' ? <>H<u>i</u>erarchy</> : <><u>{m[0]}</u>{m.slice(1)}</>}
          </MenuItem>
        ))}
      </MenuBar>
      <ToolbarRow>
        <Toolbar>
          <Grip />
          {tools.map((t) => (
            <React.Fragment key={t.name}>
              <ToolButton aria-label={t.name}>
                <ToolIcon viewBox="0 0 25 23">{t.art}</ToolIcon>
              </ToolButton>
              {t.end && <Separator />}
            </React.Fragment>
          ))}
        </Toolbar>
      </ToolbarRow>
      <TabStrip>
        <Tab $active>
          <Transistor />
          D900.asc
        </Tab>
        <Tab>
          <RawTabIcon />
          D900.raw
        </Tab>
      </TabStrip>
      <Workspace>
        <MdiWindow title="D900.raw" icon={<RawWindowIcon />} fill="#000">
          <Waveform />
        </MdiWindow>
        <MdiWindow title="D900.asc" icon={<Transistor />} fill="#d6d6c2" active>
          <Schematic />
        </MdiWindow>
      </Workspace>
      <StatusBar />
      <TaskbarRow />
    </Desktop>
  );
}

export default App;
